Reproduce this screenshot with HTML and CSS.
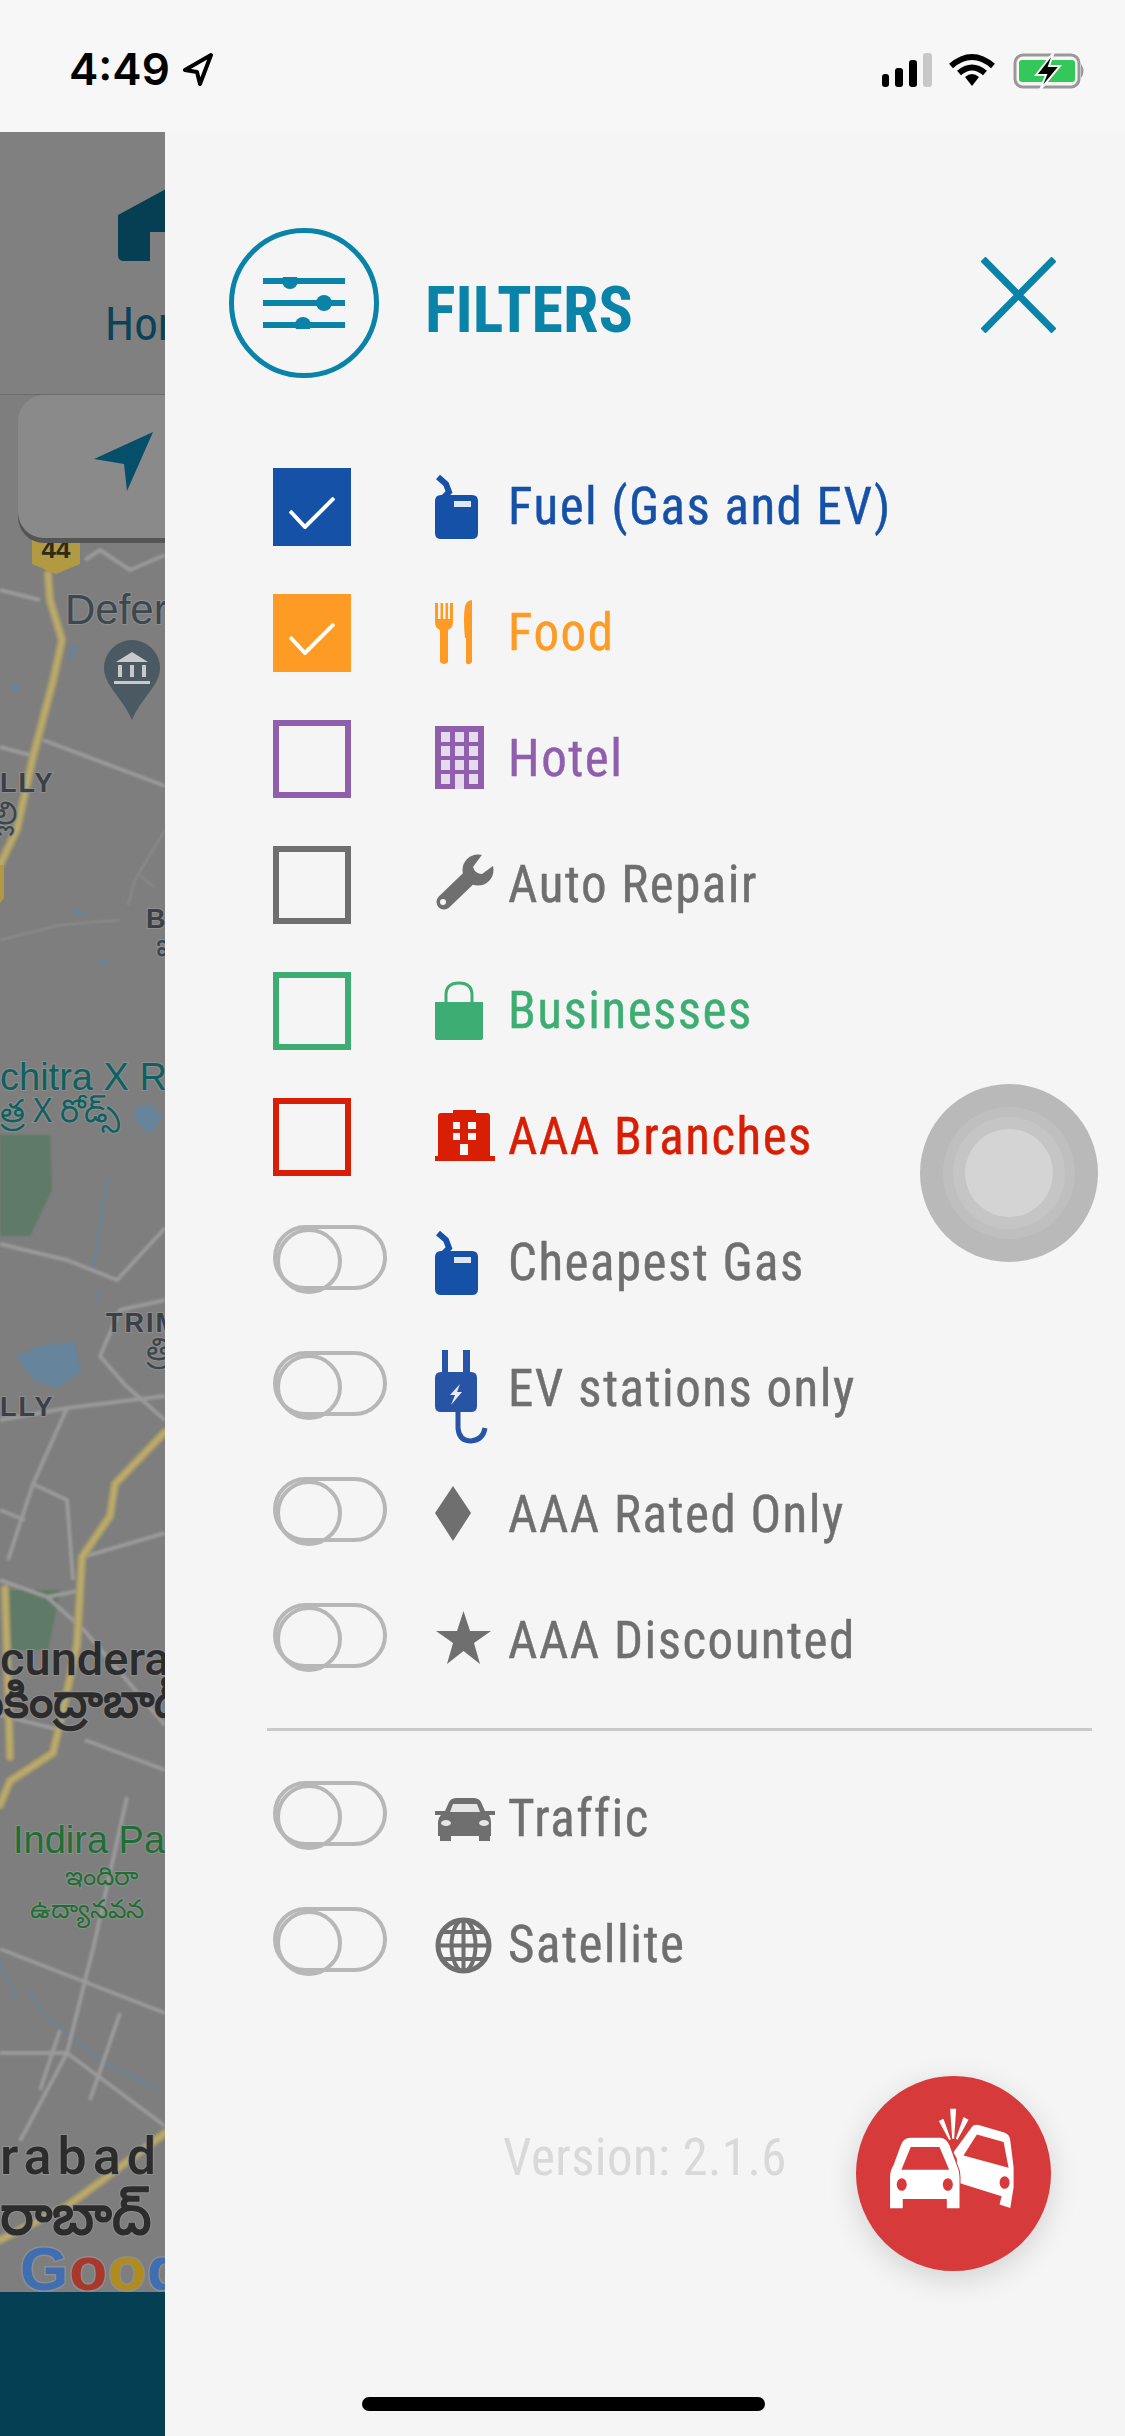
FILE: index.html
```html
<!DOCTYPE html>
<html lang="en">
<head>
    <meta charset="UTF-8">
    <title>Filters</title>
    <link rel="stylesheet" href="styles.css">
</head>
<body>
    <!-- Status Bar -->
    <header class="status-bar">
        <span class="time">4:49</span>
        <svg class="loc-arrow" width="32" height="34" viewBox="0 0 32 34"><path d="M29 3 L3 18 L15 20 L18 32 Z" fill="#fff" stroke="#000" stroke-width="4" stroke-linejoin="round"/></svg>
        <span class="status-space"></span>
        <svg class="signal" width="52" height="34" viewBox="0 0 52 34">
            <rect x="2" y="21" width="7" height="13" rx="3"/>
            <rect x="15" y="15" width="8" height="19" rx="3"/>
            <rect x="29" y="7" width="8" height="27" rx="3"/>
            <rect x="43" y="0" width="9" height="34" rx="3" fill="#c8c8c8"/>
        </svg>
        <svg class="wifi" width="48" height="34" viewBox="0 0 48 34" fill="none" stroke="#000">
            <path d="M3 13 Q24 -5 45 13" stroke-width="6"/>
            <path d="M11 20 Q24 9 37 20" stroke-width="6"/>
            <path d="M17 24 Q24 18 31 24 L24 33 Z" fill="#000" stroke="none"/>
        </svg>
        <svg class="battery" width="72" height="38" viewBox="0 0 72 38">
            <rect x="2" y="3" width="64" height="32" rx="8" fill="none" stroke="#999" stroke-width="3"/>
            <rect x="6" y="8" width="56" height="22" rx="3" fill="#34c759"/>
            <path d="M68 12 Q73 19 68 26 Z" fill="#999"/>
            <path d="M41 0 L23 23 L33 23 L27 38 L47 14 L36 14 Z" fill="#000" stroke="#f6f6f6" stroke-width="2"/>
        </svg>
    </header>

    <div class="main">
        <!-- Map behind the drawer -->
        <section class="map-col">
            <div class="map-top">
                <svg class="home-icon" width="60" height="74" viewBox="0 0 60 74"><path d="M0 27 L50 0 L60 0 V44 H32 V73 H6 Q0 73 0 67 Z" fill="#063f54"/></svg>
                <span class="home-label">Home</span>
            </div>
            <div class="map-canvas">
                <svg class="map-svg" width="165" height="1897" viewBox="0 395 165 1897">
                    <rect x="0" y="395" width="165" height="1897" fill="#7e7e7e"/>
                    <g class="map-soft">
                        <!-- parks and water -->
                        <path d="M0 1135 H50 L52 1190 L30 1236 H0 Z" fill="#5f7a66"/>
                        <path d="M8 1590 H60 L48 1650 H12 Z" fill="#5f7a66"/>
                        <path d="M16 1356 L43 1345 L75 1342 L81 1372 L57 1388 L33 1380 Z" fill="#66849c"/>
                        <path d="M134 1108 L150 1104 L162 1118 L150 1134 L136 1122 Z" fill="#66849c"/>
                        <path d="M10 680 L20 688 L14 692 Z M72 644 L78 650 L68 664 Z M73 908 L90 916 L74 914 Z M102 958 L110 964 L100 966 Z" fill="#66849c"/>
                        <path d="M107 1180 L93 1268 M100 1290 L95 1300 M28 1990 L50 2020 L100 2060 L160 2090 M0 1960 L16 2000" fill="none" stroke="#66859c" stroke-width="2"/>
                        <!-- small roads -->
                        <g fill="none" stroke="#9a9a9a" stroke-width="4" stroke-linejoin="round">
                            <path d="M43 740 L165 786"/>
                            <path d="M0 747 L30 755"/>
                            <path d="M0 590 L40 600 M165 555 L130 570 L100 550 L85 560"/>
                            <path d="M0 1244 L67 1260 L117 1280 L165 1228"/>
                            <path d="M165 1300 L120 1310 L100 1356 L125 1385 L165 1420"/>
                            <path d="M0 1420 L67 1408 L165 1396"/>
                            <path d="M67 1408 L33 1484 L8 1560"/>
                            <path d="M33 1484 L67 1500 L73 1580"/>
                            <path d="M0 1510 L25 1520"/>
                            <path d="M0 1580 L47 1597 L83 1629 L165 1725"/>
                            <path d="M83 1557 L165 1533"/>
                            <path d="M47 1597 L83 1590"/>
                            <path d="M127 1797 L93 1949 L67 2053 L20 2141"/>
                            <path d="M0 1949 L165 2013"/>
                            <path d="M0 2053 L67 2053 L165 2126"/>
                            <path d="M85 1740 L165 1770 M60 1730 L0 1715"/>
                            <path d="M120 2013 L90 2100 M60 2030 L40 2090"/>
                        </g>
                        <g fill="none" stroke="#8c8c8c" stroke-width="2">
                            <path d="M165 830 L135 880 L128 905 M140 875 L155 888"/>
                            <path d="M0 940 L60 925 L120 920"/>
                        </g>
                        <!-- highways -->
                        <g fill="none" stroke-linejoin="round" stroke-linecap="round">
                            <g stroke="#a69a6a" stroke-width="9">
                                <path d="M48 574 L50 600 L62 640 L53 681 L33 757 L17 829 L0 865"/>
                                <path d="M165 1432 L115 1484 L110 1516 L82 1557 L77 1645 L65 1701 L53 1753 L10 1781 L0 1805"/>
                                <path d="M5 1589 L10 1757"/>
                                <path d="M165 2133 L100 2182 L67 2206 L0 2240"/>
                            </g>
                            <g stroke="#bcab6c" stroke-width="4">
                                <path d="M48 574 L50 600 L62 640 L53 681 L33 757 L17 829 L0 865"/>
                                <path d="M165 1432 L115 1484 L110 1516 L82 1557 L77 1645 L65 1701 L53 1753 L10 1781 L0 1805"/>
                                <path d="M5 1589 L10 1757"/>
                                <path d="M165 2133 L100 2182 L67 2206 L0 2240"/>
                            </g>
                        </g>
                    </g>
                    <path d="M0 865 H4 V898 L0 903 Z" fill="#b29a42"/>
                    <!-- shield -->
                    <path d="M32 538 H80 V564 L56 574 L32 564 Z" fill="#b29a42"/>
                    <text class="map-text shield-text" x="56" y="558">44</text>
                    <!-- pin -->
                    <path d="M132 640 A28 28 0 0 1 160 668 C160 685 142 697 132 720 C122 697 104 685 104 668 A28 28 0 0 1 132 640 Z" fill="#4a5962"/>
                    <path d="M116 662 L132 652 L148 662 Z M118 665 V677 H122 V665 Z M130 665 V677 H134 V665 Z M142 665 V677 H146 V665 Z M114 681 H150 V684 H114 Z" fill="#c9c9c9"/>
                    <!-- labels -->
                    <text class="map-text place" x="65" y="624">Defer</text>
                    <text class="map-text small-bold" x="0" y="792">LLY</text>
                    <text class="map-text telugu t-gray" x="-6" y="824">ల్లి</text>
                    <text class="map-text small-bold" x="146" y="928">BO</text>
                    <text class="map-text telugu t-gray" x="156" y="956">ఐ</text>
                    <text class="map-text teal" x="0" y="1090">chitra X R</text>
                    <text class="map-text telugu t-teal" x="0" y="1122">త్ర X రోడ్స్</text>
                    <text class="map-text small-bold" x="106" y="1332">TRIM</text>
                    <text class="map-text telugu t-gray" x="146" y="1360">త్రి</text>
                    <text class="map-text small-bold" x="0" y="1416">LLY</text>
                    <text class="map-text dark" x="0" y="1675">cundera</text>
                    <text class="map-text telugu-big" x="-30" y="1717">సికింద్రాబాద్</text>
                    <text class="map-text green" x="13" y="1853">Indira Pa</text>
                    <text class="map-text telugu green-small" x="65" y="1885">ఇందిరా</text>
                    <text class="map-text telugu green-small" x="30" y="1918">ఉద్యానవన</text>
                    <text class="map-text dark rabad" x="0" y="2174">rabad</text>
                    <text class="map-text telugu-big telugu-low" x="0" y="2234">రాబాద్</text>
                    <text class="map-text google" x="20" y="2290"><tspan fill="#3f6fb2">G</tspan><tspan fill="#a8382c">o</tspan><tspan fill="#b08c1f">o</tspan><tspan fill="#3f6fb2">g</tspan></text>
                </svg>
                <!-- Locate Button -->
                <div class="locate-btn">
                    <svg width="60" height="60" viewBox="0 0 60 60"><path d="M59 0 L0 27 L30 32 L33 59 Z" fill="#064f6b"/></svg>
                </div>
            </div>
            <div class="map-bottom"></div>
        </section>

        <!-- Filters Drawer -->
        <aside class="drawer">
            <div class="drawer-head">
                <div class="head-badge">
                    <svg width="82" height="52" viewBox="0 0 82 52" fill="#0a83a8">
                        <rect x="0" y="1" width="82" height="6"/>
                        <rect x="0" y="23" width="82" height="6"/>
                        <rect x="0" y="45" width="82" height="6"/>
                        <circle cx="27" cy="4" r="8"/>
                        <circle cx="61" cy="26" r="8"/>
                        <circle cx="40" cy="48" r="8"/>
                    </svg>
                </div>
                <h2 class="drawer-title">FILTERS</h2>
                <svg class="close-x" width="75" height="76" viewBox="0 0 75 76"><path d="M2 2 L73 74 M73 2 L2 74" stroke="#0a83a8" stroke-width="7" fill="none"/></svg>
            </div>

            <ul class="filter-list">
                <li class="filter-row c-blue">
                    <span class="box checked"><svg width="46" height="32" viewBox="0 0 46 32"><path d="M1 14 L16 30 L45 1" fill="none" stroke="#fff" stroke-width="4"/></svg></span>
                    <svg class="row-icon" width="73" height="110" viewBox="0 0 73 110" fill="currentColor">
                        <path d="M3 25 L11 32 L14 40 L8 46" fill="none" stroke="currentColor" stroke-width="6"/>
                        <path d="M6 43 H37 Q43 43 43 49 V81 Q43 87 37 87 H6 Q0 87 0 81 V49 Q0 43 6 43 Z"/>
                        <rect x="19" y="49" width="17" height="6" fill="#dfe6f2"/>
                    </svg>
                    <span class="row-label">Fuel (Gas and EV)</span>
                </li>
                <li class="filter-row c-orange">
                    <span class="box checked"><svg width="46" height="32" viewBox="0 0 46 32"><path d="M1 14 L16 30 L45 1" fill="none" stroke="#fff" stroke-width="4"/></svg></span>
                    <svg class="row-icon" width="73" height="110" viewBox="0 0 73 110" fill="currentColor">
                        <path d="M0 25 H3 V41 H5.500 V25 H8 V41 H10.500 V25 H13 V41 H15 V25 H18 V44 Q18 50 13 52 V84 Q9 88 5 84 V52 Q0 50 0 44 Z"/>
                        <path d="M37 22 V84 Q34 88 31 85 V60 H30 Q28 40 30 28 Q32 22 37 22 Z"/>
                    </svg>
                    <span class="row-label">Food</span>
                </li>
                <li class="filter-row c-purple">
                    <span class="box"></span>
                    <svg class="row-icon" width="73" height="110" viewBox="0 0 73 110" fill="currentColor">
                        <rect x="0" y="22" width="49" height="63"/>
                        <g fill="#e4dcec">
                            <rect x="6" y="28" width="9" height="10"/><rect x="20" y="28" width="9" height="10"/><rect x="34" y="28" width="9" height="10"/>
                            <rect x="6" y="42" width="9" height="10"/><rect x="20" y="42" width="9" height="10"/><rect x="34" y="42" width="9" height="10"/>
                            <rect x="6" y="56" width="9" height="10"/><rect x="20" y="56" width="9" height="10"/><rect x="34" y="56" width="9" height="10"/>
                            <rect x="6" y="70" width="9" height="10"/><rect x="20" y="70" width="9" height="15"/><rect x="34" y="70" width="9" height="10"/>
                        </g>
                    </svg>
                    <span class="row-label">Hotel</span>
                </li>
                <li class="filter-row c-gray">
                    <span class="box"></span>
                    <svg class="row-icon" width="73" height="110" viewBox="0 0 73 110" fill="currentColor">
                        <path d="M9 72 L36 46" fill="none" stroke="currentColor" stroke-width="15" stroke-linecap="round"/>
                        <circle cx="43" cy="40" r="15.500"/>
                        <path d="M38 37 L49 22 L62 33 L47 44 Q40 44 38 37 Z" fill="#f5f5f5"/>
                        <circle cx="8" cy="72" r="3" fill="#f5f5f5"/>
                    </svg>
                    <span class="row-label">Auto Repair</span>
                </li>
                <li class="filter-row c-green">
                    <span class="box"></span>
                    <svg class="row-icon" width="73" height="110" viewBox="0 0 73 110" fill="currentColor">
                        <path d="M11 46 V39 Q11 27 24 27 Q37 27 37 39 V46" fill="none" stroke="currentColor" stroke-width="3"/>
                        <path d="M0 46 H48 V82 Q48 84 46 84 H2 Q0 84 0 82 Z"/>
                    </svg>
                    <span class="row-label">Businesses</span>
                </li>
                <li class="filter-row c-red">
                    <span class="box"></span>
                    <svg class="row-icon" width="73" height="110" viewBox="0 0 73 110" fill="currentColor">
                        <path d="M3 34 Q3 31 6 31 H18 V28 H41 V31 H52 Q55 31 55 34 V74 H60 V79 H0 V74 H3 Z"/>
                        <g fill="#f5f5f5">
                            <rect x="18" y="40" width="7" height="7"/><rect x="33" y="40" width="8" height="7"/>
                            <rect x="18" y="51" width="7" height="7"/><rect x="33" y="51" width="8" height="7"/>
                            <rect x="25" y="62" width="8" height="11"/>
                        </g>
                    </svg>
                    <span class="row-label">AAA Branches</span>
                </li>
                <li class="filter-row c-gray">
                    <span class="toggle"></span>
                    <svg class="row-icon c-blue" width="73" height="110" viewBox="0 0 73 110" fill="currentColor">
                        <path d="M3 25 L11 32 L14 40 L8 46" fill="none" stroke="currentColor" stroke-width="6"/>
                        <path d="M6 43 H37 Q43 43 43 49 V81 Q43 87 37 87 H6 Q0 87 0 81 V49 Q0 43 6 43 Z"/>
                        <rect x="19" y="49" width="17" height="6" fill="#dfe6f2"/>
                    </svg>
                    <span class="row-label">Cheapest Gas</span>
                </li>
                <li class="filter-row c-gray">
                    <span class="toggle"></span>
                    <svg class="row-icon c-ev" width="73" height="110" viewBox="0 0 73 110" fill="currentColor">
                        <rect x="7" y="16" width="6" height="24"/><rect x="28" y="16" width="7" height="24"/>
                        <path d="M0 44 Q0 38 6 38 H36 Q42 38 42 44 V72 Q42 78 36 78 H6 Q0 78 0 72 Z"/>
                        <path d="M25 50 L15 61 L20 61 L16 71 L27 58 L22 58 Z" fill="#e6ebf4"/>
                        <path d="M23 76 V94 Q24 107 36 107 Q48 106 50 94" fill="none" stroke="currentColor" stroke-width="5"/>
                    </svg>
                    <span class="row-label">EV stations only</span>
                </li>
                <li class="filter-row c-gray">
                    <span class="toggle"></span>
                    <svg class="row-icon" width="73" height="110" viewBox="0 0 73 110" fill="currentColor"><path d="M18 26 L36 53 L18 81 L0 53 Z"/></svg>
                    <span class="row-label">AAA Rated Only</span>
                </li>
                <li class="filter-row c-gray">
                    <span class="toggle"></span>
                    <svg class="row-icon" width="73" height="110" viewBox="0 0 73 110" fill="currentColor"><path d="M28.500 25 L35 45 H56 L39 57 L45 78 L28.500 65 L12 78 L18 57 L1 45 H22 Z"/></svg>
                    <span class="row-label">AAA Discounted</span>
                </li>
                <li class="row-divider"></li>
                <li class="filter-row c-gray">
                    <span class="toggle"></span>
                    <svg class="row-icon" width="73" height="110" viewBox="0 0 73 110" fill="currentColor">
                        <path d="M14 38 Q16 34 22 34 H38 Q44 34 46 38 L50 47 H60 V51 H54 Q56 54 56 58 V72 H55 V77 H44 V72 H16 V77 H5 V72 H3 V58 Q3 54 6 51 H0 V47 H10 Z"/>
                        <path d="M18 40 H42 L45 48 H15 Z" fill="#e6e6e6"/>
                        <ellipse cx="11" cy="59" rx="5" ry="3" fill="#e6e6e6"/><ellipse cx="49" cy="59" rx="5" ry="3" fill="#e6e6e6"/>
                    </svg>
                    <span class="row-label">Traffic</span>
                </li>
                <li class="filter-row c-gray">
                    <span class="toggle"></span>
                    <svg class="row-icon" width="73" height="110" viewBox="0 0 73 110" fill="none" stroke="currentColor" stroke-width="4">
                        <circle cx="28.500" cy="55.500" r="25.500" stroke-width="5"/>
                        <ellipse cx="28.500" cy="55.500" rx="12" ry="25.500"/>
                        <path d="M28.500 30 V81 M3 55.500 H54 M7 42 H50 M7 69 H50"/>
                    </svg>
                    <span class="row-label">Satellite</span>
                </li>
            </ul>

            <p class="version">Version: 2.1.6</p>
        </aside>
    </div>

    <!-- Touch indicator and crash report button float over the drawer -->
    <div class="touch-dot"><div class="ring-a"><div class="ring-b"><div class="ring-c"></div></div></div></div>
    <button class="crash-btn">
        <svg width="195" height="195" viewBox="168 137 584 584">
            <path d="M515 290 Q522 280 535 284 L612 306 Q628 311 630 330 L640 410 V470 L630 532 L598 522 L604 497 L470 455 V385 L460 365 Z" fill="#fff"/>
            <path d="M530 312 L610 335 L625 412 L490 375 Z" fill="#d63a3b"/>
            <ellipse cx="613" cy="456" rx="15" ry="19" fill="#d63a3b"/>
            <path d="M330 322 H420 Q438 322 448 345 L470 405 Q478 420 478 440 V533 H440 V505 H308 V533 H270 V440 Q270 420 280 405 L302 345 Q310 322 330 322 Z" fill="#fff" stroke="#d63a3b" stroke-width="6" paint-order="stroke"/>
            <path d="M332 350 H418 L447 418 H304 Z" fill="#d63a3b"/>
            <ellipse cx="305" cy="462" rx="15" ry="19" fill="#d63a3b"/>
            <ellipse cx="443" cy="462" rx="15" ry="19" fill="#d63a3b"/>
            <path d="M450 235 H468 L462 325 H456 Z M416 272 L430 265 L452 327 L447 329 Z M490 260 L505 268 L472 328 L467 325 Z" fill="#fff"/>
        </svg>
    </button>
    <div class="home-bar"></div>
</body>
</html>
```

FILE: styles.css
```css
* {
    box-sizing: border-box;
}
html, body {
    margin: 0;
    padding: 0;
}
body {
    position: relative;
    width: 1125px;
    height: 2436px;
    overflow: hidden;
    background-color: #f7f7f7;
    font-family: "Liberation Sans Narrow", "Roboto Condensed", Roboto, sans-serif;
}

/* status bar */
.status-bar {
    display: flex;
    align-items: flex-start;
    height: 132px;
    padding: 50px 40px 0 69px;
}
.time {
    font-family: Inter, sans-serif;
    font-size: 44px;
    font-weight: 600;
    line-height: 38px;
    color: #000;
}
.loc-arrow {
    margin: 2px 0 0 12px;
}
.status-space {
    flex: 1;
}
.signal {
    margin: 3px -1px 0 0;
}
.wifi {
    margin: 3px 17px 0 17px;
}
.battery {
    margin-top: 2px;
}

/* layout */
.main {
    display: flex;
    height: 2304px;
}
.map-col {
    display: flex;
    flex-direction: column;
    width: 165px;
    overflow: hidden;
}
.drawer {
    flex: 1;
    padding-top: 96px;
    background-color: #f5f5f5;
}

/* map side */
.map-top {
    position: relative;
    height: 263px;
    padding: 56px 0 0 118px;
    background-color: #808080;
    border-bottom: 1px solid #6c6c6c;
}
.home-icon {
    display: block;
}
.home-label {
    display: block;
    width: 200px;
    margin: 42px 0 0 -13px;
    font-size: 47px;
    line-height: 40px;
    color: #0b4257;
}
.map-canvas {
    position: relative;
    height: 1897px;
}
.map-svg {
    display: block;
}
.map-soft {
    filter: blur(1px);
}
.map-bottom {
    flex: 1;
    background-color: #053f54;
}
.locate-btn {
    position: absolute;
    left: 18px;
    top: 0;
    width: 220px;
    height: 143px;
    padding: 37px 0 0 76px;
    background-color: #8a8a8a;
    border-radius: 26px;
    box-shadow: 0 5px 0 #555;
}
.locate-btn svg {
    display: block;
}
.map-text {
    font-family: "Liberation Sans", Arial, sans-serif;
    paint-order: stroke;
    stroke: #8e8e8e;
    stroke-width: 2px;
}
.shield-text {
    font-size: 26px;
    font-weight: bold;
    text-anchor: middle;
    fill: #2e2a16;
    stroke: none;
}
.place {
    font-size: 42px;
    fill: #3c474f;
}
.small-bold {
    font-size: 27px;
    font-weight: bold;
    letter-spacing: 2px;
    fill: #3a4045;
}
.teal {
    font-size: 38px;
    fill: #0f6060;
}
.dark {
    font-family: Roboto, sans-serif;
    font-size: 47px;
    font-weight: 500;
    fill: #2c2c2c;
}
.rabad {
    font-size: 52px;
    letter-spacing: 6px;
}
.green {
    font-size: 38px;
    fill: #1e6f35;
}
.telugu {
    font-family: "Noto Sans", "Liberation Sans", sans-serif;
    font-size: 32px;
}
.t-gray {
    fill: #3c464c;
}
.t-teal {
    fill: #0f6060;
}
.green-small {
    font-size: 26px;
    fill: #1e6f35;
}
.telugu-big {
    font-family: "Noto Sans", "Liberation Sans", sans-serif;
    font-size: 48px;
    font-weight: bold;
    fill: #2c2c2c;
}
.telugu-low {
    font-size: 56px;
}
.google {
    font-size: 62px;
    font-weight: bold;
    letter-spacing: 1px;
    stroke-width: 3px;
}

/* drawer header */
.drawer-head {
    display: flex;
    align-items: center;
    padding: 0 69px 0 64px;
    height: 150px;
}
.head-badge {
    display: flex;
    align-items: center;
    justify-content: center;
    width: 150px;
    height: 150px;
    border: 5px solid #0a83a8;
    border-radius: 50%;
}
.drawer-title {
    flex: 1;
    margin: 14px 0 0 46px;
    font-size: 64px;
    font-weight: bold;
    color: #0a83a8;
}
.close-x {
    margin-bottom: 16px;
}

/* filter rows */
.filter-list {
    list-style: none;
    margin: 66px 0 0;
    padding: 0;
}
.filter-row {
    display: flex;
    align-items: center;
    height: 126px;
    padding-left: 108px;
}
.box {
    display: flex;
    align-items: center;
    justify-content: center;
    flex: none;
    width: 78px;
    height: 78px;
    margin-right: 84px;
    border: 6px solid currentColor;
}
.box.checked {
    background-color: currentColor;
    padding-top: 12px;
}
.toggle {
    position: relative;
    flex: none;
    width: 114px;
    height: 65px;
    margin: 0 48px 12px 0;
    border: 4px solid #b7b7b7;
    border-radius: 33px;
}
.toggle::before {
    content: "";
    position: absolute;
    left: -1px;
    top: -1px;
    width: 58px;
    height: 58px;
    border: 4px solid #b7b7b7;
    border-radius: 50%;
}
.row-icon {
    flex: none;
}
.row-label {
    margin-bottom: 2px;
    font-size: 51px;
    letter-spacing: 1.500px;
    -webkit-text-stroke: 0.4px currentColor;
}
.row-divider {
    height: 3px;
    margin: 24px 33px 25px 102px;
    background-color: #c9c9c9;
}
.c-blue { color: #1651a8; }
.c-orange { color: #fd9b25; }
.c-purple { color: #8f5ead; }
.c-gray { color: #6f6f6f; }
.c-green { color: #3ead73; }
.c-red { color: #d81e04; }
.c-ev { color: #2754a4; }

.version {
    margin: 122px 0 0 338px;
    font-size: 51px;
    letter-spacing: 0.400px;
    line-height: 56px;
    color: #d9d9d9;
}

/* floating */
.touch-dot {
    position: absolute;
    left: 920px;
    top: 1084px;
    display: flex;
    align-items: center;
    justify-content: center;
    width: 178px;
    height: 178px;
    border-radius: 50%;
    background-color: #b9b9b9;
}
.ring-a {
    display: flex;
    align-items: center;
    justify-content: center;
    width: 132px;
    height: 132px;
    border-radius: 50%;
    background-color: #bfbfbf;
}
.ring-b {
    display: flex;
    align-items: center;
    justify-content: center;
    width: 112px;
    height: 112px;
    border-radius: 50%;
    background-color: #c5c5c5;
}
.ring-c {
    width: 88px;
    height: 88px;
    border-radius: 50%;
    background-color: #d4d4d4;
}
.crash-btn {
    position: absolute;
    left: 856px;
    top: 2076px;
    width: 195px;
    height: 195px;
    padding: 0;
    border: 0;
    border-radius: 50%;
    background-color: #d63a3b;
    box-shadow: 0 8px 30px rgba(0,0,0,0.14);
}
.crash-btn svg {
    display: block;
}
.home-bar {
    position: absolute;
    left: 362px;
    top: 2397px;
    width: 403px;
    height: 14px;
    border-radius: 7px;
    background-color: #000;
}
```
